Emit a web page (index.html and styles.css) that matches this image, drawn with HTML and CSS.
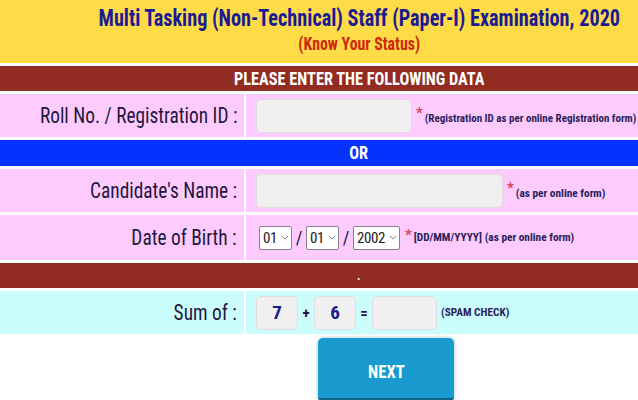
FILE: index.html
```html
<!DOCTYPE html>
<html lang="en">
<head>
<meta charset="utf-8">
<title>Know Your Status</title>
<link rel="stylesheet" href="styles.css">
</head>
<body>
<div class="page">
  <header class="head">
    <h1 class="title">Multi Tasking (Non-Technical) Staff (Paper-I) Examination, 2020</h1>
    <div class="sub">(Know Your Status)</div>
  </header>

  <div class="bar maroon"><span class="bt">PLEASE ENTER THE FOLLOWING DATA</span></div>

  <div class="row pink h43">
    <div class="lab"><span class="lt">Roll No. / Registration ID :</span></div>
    <div class="val">
      <span class="inp roll"></span><span class="req">*</span><span class="note reg">(Registration ID as per online Registration form)</span>
    </div>
  </div>

  <div class="bar blue"><span class="bt">OR</span></div>

  <div class="row pink h43">
    <div class="lab"><span class="lt">Candidate's Name :</span></div>
    <div class="val">
      <span class="inp name"></span><span class="req">*</span><span class="note">(as per online form)</span>
    </div>
  </div>

  <div class="row pink h45">
    <div class="lab"><span class="lt">Date of Birth :</span></div>
    <div class="val dob">
      <span class="sel s2"><span class="sv">01</span><svg class="chev" viewBox="0 0 10 6"><path d="M1 1l4 4 4-4"/></svg></span>
      <span class="slash">/</span>
      <span class="sel s2"><span class="sv">01</span><svg class="chev" viewBox="0 0 10 6"><path d="M1 1l4 4 4-4"/></svg></span>
      <span class="slash">/</span>
      <span class="sel s4"><span class="sv">2002</span><svg class="chev" viewBox="0 0 10 6"><path d="M1 1l4 4 4-4"/></svg></span>
      <span class="req">*</span><span class="note">[DD/MM/YYYY] (as per online form)</span>
    </div>
  </div>

  <div class="bar maroon dot"><span class="bt">.</span></div>

  <div class="row cyan h43">
    <div class="lab"><span class="lt">Sum of :</span></div>
    <div class="val sum">
      <span class="inp num">7</span>
      <span class="op">+</span>
      <span class="inp num">6</span>
      <span class="op">=</span>
      <span class="inp ans"></span>
      <span class="note spam">(SPAM CHECK)</span>
    </div>
  </div>

  <div class="actions">
    <button class="next" type="button"><span class="nt">NEXT</span></button>
  </div>
</div>
</body>
</html>
```

FILE: styles.css
```css
html, body {
  margin: 0;
  padding: 0;
  background: #ffffff;
  overflow: hidden;
}

body {
  font-family: Roboto, "Liberation Sans", sans-serif;
  font-stretch: 75%;
}

.page {
  width: 718px;
  display: flex;
  flex-direction: column;
  gap: 3px;
  background: #ffffff;
}

.head {
  height: 63px;
  background: #fedc47;
  display: flex;
  flex-direction: column;
  align-items: center;
  box-sizing: border-box;
  padding-top: 5px;
}

.title {
  display: inline-block;
  margin: 0;
  font-size: 23px;
  font-weight: 700;
  line-height: 28px;
  color: #1c1a93;
  white-space: nowrap;
  transform: scaleX(0.88);
}

.sub {
  display: inline-block;
  margin-top: 1px;
  font-size: 18px;
  font-weight: 700;
  line-height: 20px;
  color: #d0260c;
  transform: scaleX(0.88);
}

.bar {
  height: 25px;
  display: flex;
  align-items: center;
  justify-content: center;
  color: #ffffff;
  font-weight: 700;
  font-size: 18.5px;
}

.bt {
  display: inline-block;
  transform: scaleX(0.88);
}

.maroon { background: #922c22; }
.blue { background: #0532fd; height: 26px; }
.dot { font-size: 12px; }

.row {
  display: grid;
  grid-template-columns: 244px 1fr;
  column-gap: 2px;
}

.h43 { height: 43px; }
.h45 { height: 45px; }

.pink .lab, .pink .val { background: #fdcbfd; }
.cyan .lab, .cyan .val { background: #ccfdfd; }

.lab {
  display: flex;
  align-items: center;
  justify-content: flex-end;
  padding-right: 7px;
  font-size: 22px;
  color: #24163f;
  white-space: nowrap;
}

.lt {
  display: inline-block;
  transform: scaleX(0.88);
  transform-origin: right center;
}

.val {
  display: flex;
  align-items: center;
  padding-left: 10px;
  white-space: nowrap;
}

.inp {
  display: inline-flex;
  align-items: center;
  justify-content: center;
  box-sizing: border-box;
  height: 34px;
  background: #f1f0f1;
  border: 1px solid #e0dce0;
  border-radius: 5px;
}

.roll { width: 156px; }
.name { width: 247px; }

.req {
  color: #dc4452;
  font-size: 15px;
  font-weight: 700;
  align-self: flex-start;
  margin-top: 12px;
  margin-left: 4px;
  margin-right: 2px;
  line-height: 15px;
}

.note {
  font-size: 11.3px;
  font-weight: 700;
  color: #2b1d5c;
  margin-top: 5px;
}

.note.reg { font-size: 11px; }

.dob { padding-left: 13px; }
.dob .req { margin-top: 13px; margin-left: 5px; }
.dob .note { margin-top: 0; }

.sel {
  display: inline-flex;
  align-items: center;
  justify-content: space-between;
  box-sizing: border-box;
  height: 24px;
  padding: 0 2px 0 3px;
  background: #ffffff;
  border: 1px solid #86808a;
  border-radius: 2px;
  font-size: 15px;
  color: #222222;
  overflow: hidden;
}

.sv { letter-spacing: -0.4px; }

.s2 { width: 33px; }
.s4 { width: 47px; }

.chev {
  flex-shrink: 0;
  width: 8px;
  height: 5px;
  fill: none;
  stroke: #707070;
  stroke-width: 1.1;
}

.slash {
  width: 14px;
  text-align: center;
  font-size: 18px;
  color: #24163f;
}

.sum .num {
  width: 42px;
  font-size: 19px;
  font-weight: 700;
  color: #1a1a8c;
}

.ans { width: 65px; }

.op {
  font-size: 15px;
  font-weight: 700;
  color: #24163f;
  width: 16px;
  text-align: center;
}

.sum .spam { margin-top: 0; margin-left: 4px; }

.actions {
  padding-left: 318px;
  padding-top: 1px;
}

.next {
  width: 136px;
  height: 64px;
  background: #199bd0;
  border: none;
  border-bottom: 4px solid #0f6688;
  border-radius: 5px;
  box-shadow: 0 0 4px rgba(0, 90, 130, 0.35);
  color: #ffffff;
  font-family: Roboto, "Liberation Sans", sans-serif;
  font-stretch: 75%;
  font-size: 18.5px;
  font-weight: 700;
  padding: 8px 0 0;
}

.nt {
  display: inline-block;
  transform: scaleX(0.9);
}
```
